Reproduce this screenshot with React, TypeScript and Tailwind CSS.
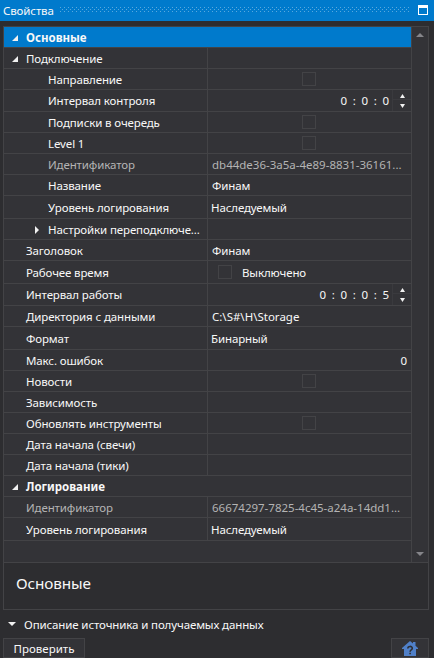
import React from 'react';

type Kind = 'text' | 'check' | 'toggle' | 'spin' | 'number' | 'select' | 'category';

interface Row {
  label: string;
  h: string;
  kind?: Kind;
  value?: string;
  level?: number;
  muted?: boolean;
  arrow?: 'open' | 'closed';
  latin?: boolean;
}

const rows: Row[] = [
  { label: 'Подключение', h: 'h-[21px]', arrow: 'open' },
  { label: 'Направление', h: 'h-[21px]', level: 1, kind: 'check' },
  { label: 'Интервал контроля', h: 'h-[22px]', level: 1, kind: 'spin', value: '0:0:0' },
  { label: 'Подписки в очередь', h: 'h-[21px]', level: 1, kind: 'check' },
  { label: 'Level 1', h: 'h-[21px]', level: 1, kind: 'check' },
  { label: 'Идентификатор', h: 'h-[21px]', level: 1, muted: true, latin: true, value: 'db44de36-3a5a-4e89-8831-36161...' },
  { label: 'Название', h: 'h-[21px]', level: 1, value: 'Финам' },
  { label: 'Уровень логирования', h: 'h-[23px]', level: 1, kind: 'select', value: 'Наследуемый' },
  { label: 'Настройки переподключе...', h: 'h-[21px]', level: 1, arrow: 'closed' },
  { label: 'Заголовок', h: 'h-[21px]', value: 'Финам' },
  { label: 'Рабочее время', h: 'h-[23px]', kind: 'toggle', value: 'Выключено' },
  { label: 'Интервал работы', h: 'h-[22px]', kind: 'spin', value: '0:0:0:5' },
  { label: 'Директория с данными', h: 'h-[21px]', latin: true, value: 'C:\\S#\\H\\Storage' },
  { label: 'Формат', h: 'h-[23px]', kind: 'select', value: 'Бинарный' },
  { label: 'Макс. ошибок', h: 'h-[21px]', kind: 'number', value: '0' },
  { label: 'Новости', h: 'h-[21px]', kind: 'check' },
  { label: 'Зависимость', h: 'h-[21px]' },
  { label: 'Обновлять инструменты', h: 'h-[21px]', kind: 'check' },
  { label: 'Дата начала (свечи)', h: 'h-[21px]' },
  { label: 'Дата начала (тики)', h: 'h-[21px]' },
  { label: 'Логирование', h: 'h-[21px]', kind: 'category', arrow: 'open' },
  { label: 'Идентификатор', h: 'h-[21px]', muted: true, latin: true, value: '66674297-7825-4c45-a24a-14dd1...' },
  { label: 'Уровень логирования', h: 'h-[23px]', kind: 'select', value: 'Наследуемый' },
];

function Arrow({ type }: { type: 'open' | 'closed' }) {
  return type === 'open' ? (
    <svg width="6" height="6" viewBox="0 0 6 6"><path d="M6 0V6H0Z" fill="#f1f1f1" /></svg>
  ) : (
    <svg width="4" height="8" viewBox="0 0 4 8"><path d="M0 0L4 4L0 8Z" fill="#f1f1f1" /></svg>
  );
}

function Box() {
  return <span className="block size-[14px] shrink-0 border border-[#434346]" />;
}

function Spinner({ value }: { value: string }) {
  return (
    <div className="flex h-full w-full items-stretch justify-end">
      <div className="flex items-start pt-[3px] tracking-normal">
        {value.split('').map((c, i) => (
          <span key={i} className="w-[10.5px] text-center">{c}</span>
        ))}
      </div>
      <div className="ml-px flex w-[19px] flex-col border-l border-[#3a3a3e]">
        <span className="flex h-[10px] items-start justify-center border-b border-[#3a3a3e] pt-1">
          <svg width="5" height="4" viewBox="0 0 5 4"><path d="M2.5 0L5 4H0Z" fill="#f1f1f1" /></svg>
        </span>
        <span className="flex flex-1 items-start justify-center pt-1">
          <svg width="5" height="4" viewBox="0 0 5 4"><path d="M0 0H5L2.5 4Z" fill="#f1f1f1" /></svg>
        </span>
      </div>
    </div>
  );
}

function Value({ row }: { row: Row }) {
  switch (row.kind) {
    case 'check':
      return <div className="flex w-full justify-center pr-px"><Box /></div>;
    case 'toggle':
      return <div className="flex items-center gap-[10px] pl-[10px]"><Box /><span className="pt-0.5">{row.value}</span></div>;
    case 'spin':
      return <Spinner value={row.value ?? ''} />;
    case 'number':
      return <div className="w-full pr-1 pt-0.5 text-right">{row.value}</div>;
    case 'select':
      return <span className="pl-[3px] pt-0.5">{row.value}</span>;
    default:
      return <span className={`pl-1 pt-0.5 ${row.latin ? 'tracking-normal' : ''}`}>{row.value}</span>;
  }
}

function PropertyRow({ row }: { row: Row }) {
  const category = row.kind === 'category';
  return (
    <div className={`flex shrink-0 border-b border-[#434346] ${row.h} ${row.muted ? 'text-[#b4b4b4]' : ''}`}>
      <div className={`flex items-center overflow-hidden ${category ? 'w-full font-bold tracking-normal' : 'w-[204px] border-r border-[#434346]'}`}>
        <span className={`flex shrink-0 items-center pt-px ${row.level ? 'w-11 pl-[31px]' : 'w-[22px] pl-2'}`}>
          {row.arrow && <Arrow type={row.arrow} />}
        </span>
        <span className={row.kind === 'spin' ? 'pt-px pb-px' : 'pt-0.5'}>{row.label}</span>
      </div>
      {!category && <div className="flex min-w-0 flex-1 items-center"><Value row={row} /></div>}
    </div>
  );
}

export default function App() {
  return (
    <div className="flex h-[658px] w-[434px] flex-col overflow-hidden whitespace-nowrap bg-[#2d2d30] font-['Noto_Sans','Open_Sans',sans-serif] text-[11.5px] leading-[16px] tracking-[-0.12px] text-[#f8f8f8]">
      <header className="flex h-[21px] shrink-0 items-start bg-[#007acc] pl-[3px] pr-[6px]">
        <span className="w-[57px] pt-[3px]">Свойства</span>
        <svg width="350" height="5" className="mt-[7px] shrink-0">
          <defs>
            <pattern id="grip" width="4" height="4" patternUnits="userSpaceOnUse">
              <path d="M0 0h1v1H0zM2 2h1v1H2z" fill="#59a8de" />
            </pattern>
          </defs>
          <rect width="350" height="5" fill="url(#grip)" />
        </svg>
        <span className="ml-auto mt-[5px] block h-[10px] w-[10px] border border-t-[3px] border-white" />
      </header>

      <main className="ml-[3px] mt-[5px] flex h-[584px] w-[426px] shrink-0 flex-col border border-[#434346]">
        <section className="flex h-[536px] shrink-0 border-b border-[#434346] bg-[#333337]">
          <div className="flex w-[408px] flex-col border-r border-[#434346]">
            <div className="flex h-[21px] shrink-0 items-center border-b border-[#434346] bg-[#007acc] font-bold tracking-normal">
              <span className="w-[22px] pl-2 pt-px"><Arrow type="open" /></span>
              <span className="pt-0.5">Основные</span>
            </div>
            {rows.map((row, i) => <PropertyRow key={i} row={row} />)}
          </div>
          <div className="flex flex-1 flex-col items-center justify-between py-[6px]">
            <svg width="8" height="4" viewBox="0 0 8 4"><path d="M4 0L8 4H0Z" fill="#85858a" /></svg>
            <svg width="8" height="4" viewBox="0 0 8 4"><path d="M0 0H8L4 4Z" fill="#85858a" /></svg>
          </div>
        </section>
        <section className="flex flex-1 items-start pl-3 pt-[9px] text-[15.3px] leading-[22px]">Основные</section>
      </main>

      <div className="flex h-[28px] shrink-0 items-start pl-2 pt-[6px]">
        <svg width="8" height="4" viewBox="0 0 8 4" className="mt-[6px]"><path d="M0 0H8L4 4Z" fill="#f1f1f1" /></svg>
        <span className="ml-2 pt-px">Описание источника и получаемых данных</span>
      </div>
      <footer className="flex h-5 shrink-0 justify-between pl-[3px] pr-[5px]">
        <button className="flex h-5 w-[82px] items-center justify-center border border-[#434346] bg-[#333337] pt-0.5 tracking-normal">Проверить</button>
        <button className="flex h-5 w-[38px] items-center justify-center border border-[#434346] bg-[#333337] pt-px">
          <svg width="16" height="15" viewBox="0 0 16 15">
            <path d="M8 0L11 2.6V1H13.5V4.8L16 7V8H14V15H2V8H0V7Z" fill="#5080c8" />
            <path d="M5.8 7.6C5.8 4.7 10.3 4.8 10.3 7.3C10.3 9 8.1 8.9 8.1 10.7M8.1 11.7v1.6" stroke="#2d2d30" strokeWidth="1.6" fill="none" />
          </svg>
        </button>
      </footer>
    </div>
  );
}
